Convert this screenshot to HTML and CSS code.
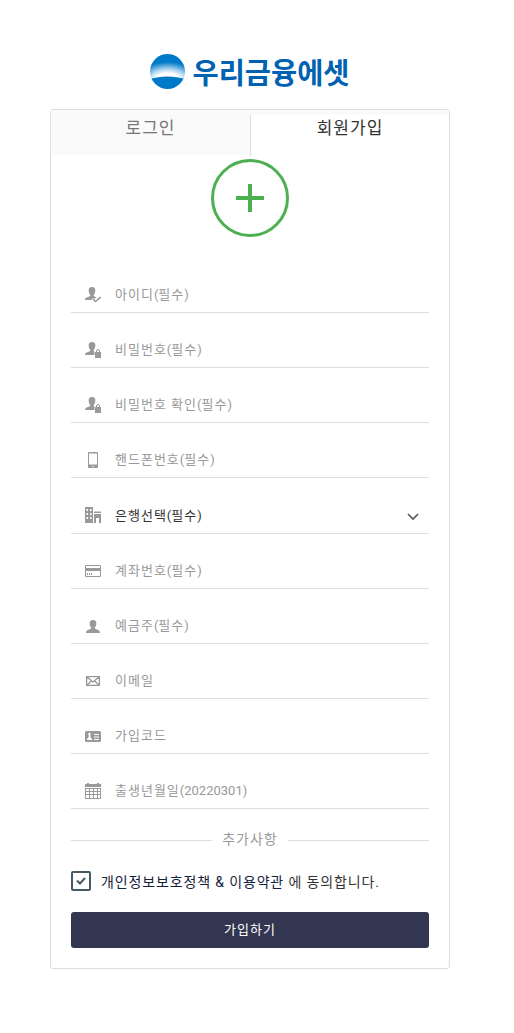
FILE: index.html
```html
<!DOCTYPE html>
<html lang="ko">
  <head>
    <meta charset="UTF-8">
    <title>우리금융에셋</title>
    <link rel="stylesheet" href="styles.css">
  </head>
  <body>
    <div class="content">
      <div class="logo">
        <svg width="200" height="54" viewBox="0 0 200 54">
          <defs>
            <radialGradient id="sky" gradientUnits="userSpaceOnUse" cx="0" cy="0" r="1" gradientTransform="translate(17.5 32) scale(33 21)">
              <stop offset="0.42" stop-color="#fff"/>
              <stop offset="0.62" stop-color="#a8d3ee"/>
              <stop offset="0.95" stop-color="#007ac8"/>
            </radialGradient>
            <clipPath id="ball"><circle cx="17.5" cy="21.5" r="17.5"/></clipPath>
          </defs>
          <g clip-path="url(#ball)">
            <rect y="4" width="35" height="35" fill="url(#sky)"/>
            <path d="M0 29C10 25.500 25 25.500 35 29V40H0Z" fill="#007ac8"/>
          </g>
          <text class="logo-text" x="42.500" y="34" textLength="157" lengthAdjust="spacingAndGlyphs">우리금융에셋</text>
        </svg>
      </div>
      <div class="card">
        <div class="tabs">
          <div class="tab">로그인</div>
          <div class="tab active">회원가입</div>
        </div>
        <div class="plus">
          <svg width="28" height="28"><path d="M0 14H28M14 0V28" stroke="#4caf50" stroke-width="4"/></svg>
        </div>
        <div class="form">
          <div class="field">
            <svg class="icon" viewBox="0 0 16 16"><path d="M7 0C9.500 0 10.500 1.500 10.300 4C10.200 6 9.300 7 8.700 8C8.700 9 9 9.300 11.500 10.300L9 12L8 11L6.500 12.500L7.500 13H0C0 11 1 10.500 3 10C5 9.300 5.300 9 5.300 8C4.500 7 3.800 6 3.700 4C3.500 1.500 4.500 0 7 0Z"/><path d="M8 12L10.500 14.500L15.500 10" fill="none" stroke="#999" stroke-width="1.600"/></svg>
            <span>아이디<i>(</i>필수<i>)</i></span>
          </div>
          <div class="field">
            <svg class="icon" viewBox="0 0 16 16"><path d="M7 0C9.500 0 10.500 1.500 10.300 4C10.200 6 9.300 7 8.700 8V9L9.500 10V13H0C0 11 1 10.500 3 10C5 9.300 5.300 9 5.300 8C4.500 7 3.800 6 3.700 4C3.500 1.500 4.500 0 7 0Z"/><path d="M10 10H16V16H10Z"/><path d="M11.500 10.500V9A1.500 1.500 0 0 1 14.500 9V10.500" fill="none" stroke="#999"/></svg>
            <span>비밀번호<i>(</i>필수<i>)</i></span>
          </div>
          <div class="field">
            <svg class="icon" viewBox="0 0 16 16"><path d="M7 0C9.500 0 10.500 1.500 10.300 4C10.200 6 9.300 7 8.700 8V9L9.500 10V13H0C0 11 1 10.500 3 10C5 9.300 5.300 9 5.300 8C4.500 7 3.800 6 3.700 4C3.500 1.500 4.500 0 7 0Z"/><path d="M10 10H16V16H10Z"/><path d="M11.500 10.500V9A1.500 1.500 0 0 1 14.500 9V10.500" fill="none" stroke="#999"/></svg>
            <span>비밀번호 확인<i>(</i>필수<i>)</i></span>
          </div>
          <div class="field">
            <svg class="icon" viewBox="0 0 16 16"><path fill-rule="evenodd" d="M4 0H12Q13 0 13 1V15Q13 16 12 16H4Q3 16 3 15V1Q3 0 4 0ZM4 1.500V12.500H12V1.500ZM7.300 14V15H8.700V14Z"/></svg>
            <span>핸드폰번호<i>(</i>필수<i>)</i></span>
          </div>
          <div class="field select">
            <svg class="icon" viewBox="0 0 16 16"><path fill-rule="evenodd" d="M0 0H8V16H0ZM1.500 2V4H3V2ZM5 2V4H6.500V2ZM1.500 6V8H3V6ZM5 6V8H6.500V6ZM1.500 10V12H3V10ZM5 10V12H6.500V10ZM9 4.500H16V6H9ZM9 7H16V16H14V11H11V16H9Z"/></svg>
            <span>은행선택<i>(</i>필수<i>)</i></span>
            <svg class="arrow" width="12" height="8"><path d="M1 1L6 6L11 1" fill="none" stroke="#555" stroke-width="1.600"/></svg>
          </div>
          <div class="field">
            <svg class="icon" viewBox="0 0 16 16"><path fill-rule="evenodd" d="M1 2H15Q16 2 16 3V13Q16 14 15 14H1Q0 14 0 13V3Q0 2 1 2ZM1 3V5H15V3ZM1 8V13H15V8Z"/><path d="M2 10H3V12H2ZM4 10H5V12H4ZM6 10H7V12H6Z"/></svg>
            <span>계좌번호<i>(</i>필수<i>)</i></span>
          </div>
          <div class="field">
            <svg class="icon" viewBox="0 0 16 16"><path d="M8 2C10.500 2 11.500 3.500 11.300 6C11.200 8 10.300 9 9.700 9.500C9.700 10.700 10.500 11 12.500 11.800C14.500 12.500 15 13.500 15 15H1C1 13.500 1.500 12.500 3.500 11.800C5.500 11 6.300 10.700 6.300 9.500C5.500 9 4.800 8 4.700 6C4.500 3.500 5.500 2 8 2Z"/></svg>
            <span>예금주<i>(</i>필수<i>)</i></span>
          </div>
          <div class="field">
            <svg class="icon" viewBox="0 0 16 16"><path d="M1.600 3.600H14.400V12.400H1.600ZM2 4L8 9L14 4M2 12L6.500 8M14 12L9.500 8" fill="none" stroke="#999" stroke-width="1.300"/></svg>
            <span>이메일</span>
          </div>
          <div class="field">
            <svg class="icon" viewBox="0 0 16 16"><path fill-rule="evenodd" d="M1.500 3H14.500Q16 3 16 4.500V12.500Q16 14 14.500 14H1.500Q0 14 0 12.500V4.500Q0 3 1.500 3ZM4.500 4.500Q3 4.500 3.300 6.500L3.800 8L3.300 9.500L2 11V12H7V11L5.700 9.500L5.200 8L5.700 6.500Q6 4.500 4.500 4.500ZM9 6V7H14V6ZM9 8.500V9.500H14V8.500ZM9 11V12H14V11Z"/></svg>
            <span>가입코드</span>
          </div>
          <div class="field">
            <svg class="icon" viewBox="0 0 16 16"><path fill-rule="evenodd" d="M0 1H2V0H4V1H12V0H14V1H16V4H0ZM0 5H16V16H0ZM1 6V8H4V6ZM5 6V8H8V6ZM9 6V8H12V6ZM13 6V8H15V6ZM1 9V11H4V9ZM5 9V11H8V9ZM9 9V11H12V9ZM13 9V11H15V9ZM1 12V15H4V12ZM5 12V15H8V12ZM9 12V15H12V12ZM13 12V15H15V12Z"/></svg>
            <span>출생년월일<i>(20220301)</i></span>
          </div>
          <div class="divider"><span>추가사항</span></div>
          <div class="agree">
            <span class="check"><svg width="10" height="8"><path d="M1 3.500L4 6.500L9 1" fill="none" stroke="#455a64" stroke-width="2"/></svg></span>
            <p><a>개인정보보호정책 &amp; 이용약관</a> 에 동의합니다.</p>
          </div>
          <button>가입하기</button>
        </div>
      </div>
    </div>
  </body>
</html>
```
FILE: styles.css
```css
body {
  margin: 0;
  background: #fff;
  font-family: Roboto, "Noto Sans CJK KR", sans-serif;
  font-size: 13px;
  color: #333;
}
.content {
  width: 400px;
  margin-left: 50px;
  padding-top: 50px;
}
.logo {
  height: 59px;
  text-align: center;
}
.logo svg {
  display: block;
  margin: 0 auto;
  overflow: visible;
}
.logo-text {
  font-family: "Noto Sans CJK KR", sans-serif;
  font-size: 29px;
  font-weight: bold;
  fill: #0062b1;
}
.card {
  box-sizing: border-box;
  height: 860px;
  border: 1px solid #ddd;
  border-radius: 3px;
}
.tabs {
  display: flex;
  height: 45px;
  background: linear-gradient(#fafafa 5px, transparent 5px);
}
.tab {
  box-sizing: border-box;
  width: 199px;
  padding-top: 6px;
  background: #fafafa;
  color: #777;
  font-size: 17px;
  line-height: 25px;
  letter-spacing: 1px;
  text-align: center;
}
.tab.active {
  height: 41px;
  margin-top: 5px;
  padding-top: 1px;
  border-left: 1px solid #ddd;
  background: #fff;
  color: #333;
}
.plus {
  box-sizing: border-box;
  display: flex;
  align-items: center;
  justify-content: center;
  width: 78px;
  height: 78px;
  margin: 4px auto 0;
  border: 3px solid #4caf50;
  border-radius: 50%;
}
.form {
  padding: 40px 20px 0;
}
.field {
  box-sizing: border-box;
  display: flex;
  align-items: center;
  height: 36px;
  margin-bottom: 19px;
  padding-left: 14px;
  border-bottom: 1px solid #ddd;
  color: #999;
  letter-spacing: 1px;
}
.field span {
  padding-bottom: 2px;
}
.field i {
  font-style: normal;
  letter-spacing: 0;
}
.field.select {
  height: 37px;
  color: #333;
}
.icon {
  width: 16px;
  height: 16px;
  margin-right: 14px;
  fill: #999;
}
.arrow {
  margin-top: 3px;
  margin-left: auto;
  margin-right: 10px;
}
.divider {
  display: flex;
  align-items: center;
  gap: 10px;
  height: 22px;
  margin-top: 20px;
  color: #999;
  font-size: 14px;
  letter-spacing: 1px;
}
.divider span {
  padding-bottom: 5px;
}
.divider::before,
.divider::after {
  content: "";
  flex: 1;
  height: 1px;
  background: #ddd;
}
.agree {
  display: flex;
  align-items: center;
  gap: 10px;
  height: 20px;
  margin-top: 20px;
  font-size: 14px;
}
.agree p {
  margin: -1px 0 0;
  letter-spacing: 0.86px;
}
.agree a {
  color: #14213d;
}
.check {
  box-sizing: border-box;
  display: flex;
  align-items: center;
  justify-content: center;
  width: 20px;
  height: 20px;
  border: 2px solid #455a64;
  border-radius: 2px;
}
button {
  display: block;
  width: 100%;
  height: 36px;
  margin-top: 21px;
  padding: 0 0 4px;
  border: 0;
  border-radius: 3px;
  background: #333650;
  color: #fff;
  font-family: inherit;
  font-size: 13px;
  letter-spacing: 1px;
}
```
